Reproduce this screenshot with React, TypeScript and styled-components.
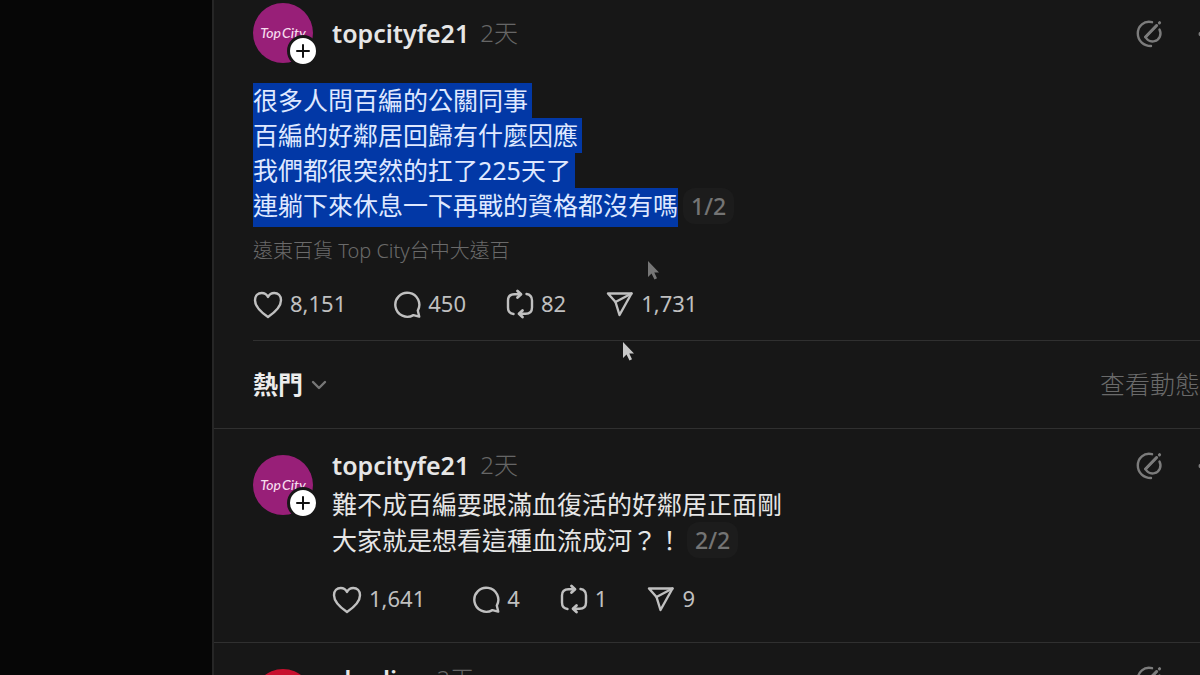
import React from "react";
import styled, { createGlobalStyle } from "styled-components";

const GlobalStyle = createGlobalStyle`
  * { box-sizing: border-box; }
  body {
    margin: 0;
    background: #060606;
    color: #e6e6e6;
    font-family: "Noto Sans", "Noto Sans CJK TC", sans-serif;
    font-size: 25px;
    overflow: hidden;
  }
  button {
    font: inherit;
    color: inherit;
    background: none;
    border: 0;
    padding: 0;
    cursor: pointer;
  }
  a { color: inherit; text-decoration: none; }
  svg { display: block; flex: none; }
`;

const Page = styled.div`
  position: relative;
  height: 100vh;
  padding-left: 212px;
  overflow: hidden;
`;

const Feed = styled.main`
  min-height: 100%;
  background: #171717;
  border-left: 2px solid #262626;
`;

const RootPost = styled.article`
  margin-left: 39px;
  padding: 3px 0 20px;
  border-bottom: 1px solid #303030;
`;

const PostHeader = styled.header`
  display: flex;
  align-items: center;
  gap: 19px;
`;

const Reply = styled.article`
  display: flex;
  gap: 19px;
  padding: 20px 0 27px 39px;
  border-bottom: 1px solid #303030;
`;

const ReplyMain = styled.div`
  flex: 1;
  min-width: 0;
`;

const NameRow = styled.div`
  flex: 1;
  display: flex;
  align-items: center;
  gap: 11px;
  height: 32px;
`;

const UserName = styled.a`
  font-weight: 600;
  line-height: 32px;
`;

const Time = styled.time`
  color: #666;
  font-size: 24px;
  font-weight: 300;
  line-height: 32px;
`;

const Tools = styled.div`
  display: flex;
  align-items: center;
  gap: 34px;
  margin-left: auto;
  margin-right: -25px;
  padding-top: 2px;
  color: #7c7c7c;
`;

const AvatarBox = styled.div<{ $low?: boolean }>`
  position: relative;
  flex: none;
  width: 60px;
  height: 60px;
  margin-top: ${(p) => (p.$low ? "6px" : "0")};
`;

const AvatarDisc = styled.a<{ $color: string }>`
  display: flex;
  align-items: center;
  justify-content: center;
  gap: 1px;
  width: 60px;
  height: 60px;
  border-radius: 50%;
  background: ${(p) => p.$color};
  color: #f6dcee;
  font: italic 500 14px/20px Lato, sans-serif;
  white-space: nowrap;
`;

const FollowButton = styled.button`
  position: absolute;
  right: -6px;
  bottom: -4px;
  display: flex;
  align-items: center;
  justify-content: center;
  width: 32px;
  height: 32px;
  border: 3px solid #171717;
  border-radius: 50%;
  background: #fff;
  color: #111;
`;

const Selected = styled.p`
  display: flex;
  flex-direction: column;
  align-items: flex-start;
  margin: 20px 0 0;
  line-height: 35px;
`;

const SelectedLine = styled.span<{ $last?: boolean }>`
  padding-right: ${(p) => (p.$last ? "0" : "4px")};
  padding-bottom: ${(p) => (p.$last ? "4px" : "0")};
  background: #0238a6;
  color: #dfe8ff;
`;

const LastLine = styled.span`
  display: flex;
  align-items: flex-start;
  gap: 5px;
`;

const Counter = styled.span`
  display: inline-block;
  padding: 0 8px;
  border-radius: 12px;
  background: #1c1c1c;
  color: #747474;
  font-size: 23px;
  font-weight: 500;
  line-height: 36px;
`;

const ReplyText = styled.p`
  display: flex;
  flex-direction: column;
  margin: 5px 0 0;
  line-height: 36px;
`;

const Caption = styled.p`
  margin: 10px 0 0;
  color: #6a6a6a;
  font-size: 20px;
  font-weight: 300;
  line-height: 28px;
`;

const Actions = styled.div<{ $gap: number }>`
  display: flex;
  align-items: center;
  gap: 40px;
  margin-top: ${(p) => p.$gap}px;
  color: #c0c0c0;
  font-size: 22px;
`;

const Action = styled.button<{ $wide?: boolean }>`
  display: flex;
  align-items: center;
  gap: 7px;
  height: 32px;
  padding-right: ${(p) => (p.$wide ? "7px" : "0")};
  line-height: 30px;
`;

const Count = styled.span`
  height: 32px;
`;

const SortBar = styled.nav`
  display: flex;
  align-items: center;
  justify-content: space-between;
  height: 88px;
  padding: 0 0 3px 39px;
  border-bottom: 1px solid #303030;
`;

const SortButton = styled.button`
  display: flex;
  align-items: center;
  gap: 7px;
  font-weight: 700;
  color: #ececec;
  svg { color: #777; margin-top: 4px; }
`;

const ActivityLink = styled.a`
  color: #6a6a6a;
  font-weight: 300;
  white-space: nowrap;
`;

const Pointer = styled.svg<{ $x: number; $y: number; $faded?: boolean }>`
  position: absolute;
  left: ${(p) => p.$x}px;
  top: ${(p) => p.$y}px;
  fill: ${(p) => (p.$faded ? "#777" : "#c8c8c8")};
  pointer-events: none;
`;

const line = {
  fill: "none",
  stroke: "currentColor",
  strokeWidth: 2.4,
  strokeLinecap: "round" as const,
  strokeLinejoin: "round" as const,
};

const Heart = () => (
  <svg width="30" height="30" viewBox="0 0 30 30" {...line}>
    <path d="M15 28C11.5 25.6 2 19 2 11.2C2 6.800 5 4 8.700 4C11.500 4 13.800 5.500 15 8C16.200 5.500 18.500 4 21.300 4C25 4 28 6.800 28 11.200C28 19 18.500 25.600 15 28Z" />
  </svg>
);

const Comment = () => (
  <svg width="28" height="30" viewBox="0 0 28 30" {...line}>
    <path d="M24.800 21.600A12 12 0 1 0 20.400 26.100L26.200 27.600Z" />
  </svg>
);

const Repost = () => (
  <svg width="28" height="30" viewBox="0 0 28 30" {...line}>
    <path d="M7.500 25C4 24.500 2 22.500 2 18.500V11.500C2 7.500 4.500 5.200 8.500 5.200H14.500" />
    <path d="M11.500 2L15 5.200L11.500 8.500" strokeWidth="2.800" />
    <path d="M20.500 5C24 5.500 26 7.500 26 11.500V18.500C26 22.500 23.500 24.800 19.500 24.800H13.500" />
    <path d="M16.500 21.500L13 24.800L16.500 28" strokeWidth="2.800" />
  </svg>
);

const Share = () => (
  <svg width="28" height="30" viewBox="0 0 28 30" {...line}>
    <path d="M2 4.500H25.500L13.500 26L9.500 13Z" />
    <path d="M9.500 13L25.500 4.500" />
  </svg>
);

const Edit = () => (
  <svg width="27" height="28" viewBox="0 0 27 28" {...line}>
    <path d="M16 2.200C8 .3 1.800 6 1.800 13.500C1.800 21 8 26 15 26" />
    <path d="M20.600 5.500L9.500 17C11.500 20.500 15 22 18.500 21.200C23.500 20 26 14.500 23.500 9.500" />
    <path d="M20.600 5.500L9.500 17" strokeWidth="3" />
    <path d="M23.400 2.900L23.600 2.700" strokeWidth="3" />
  </svg>
);

const More = () => (
  <svg width="28" height="28" viewBox="0 0 28 28" fill="currentColor">
    <circle cx="4" cy="14" r="2.500" />
    <circle cx="14" cy="14" r="2.500" />
    <circle cx="24" cy="14" r="2.500" />
  </svg>
);

const Plus = () => (
  <svg width="16" height="16" viewBox="0 0 16 16" {...line} strokeWidth={2}>
    <path d="M8 2V14M2 8H14" />
  </svg>
);

const Chevron = () => (
  <svg width="18" height="18" viewBox="0 0 18 18" {...line}>
    <path d="M3 6L9 12L15 6" />
  </svg>
);

const Arrow = (p: { x: number; y: number; faded?: boolean }) => (
  <Pointer $x={p.x} $y={p.y} $faded={p.faded} width="13" height="20" viewBox="0 0 13 20" aria-hidden="true">
    <path d="M1 1V17L4.500 13.500L7.500 19.500L10 18.300L7.300 12.500H12Z" />
  </Pointer>
);

type AvatarProps = { user: string; color: string; label?: string[]; low?: boolean };

const Avatar = ({ user, color, label = [], low }: AvatarProps) => (
  <AvatarBox $low={low}>
    <AvatarDisc href="#" $color={color} aria-label={user}>
      {label.map((word) => <span key={word}>{word}</span>)}
    </AvatarDisc>
    <FollowButton aria-label="追蹤">
      <Plus />
    </FollowButton>
  </AvatarBox>
);

const Author = ({ user }: { user: string }) => (
  <NameRow>
    <UserName href="#">{user}</UserName>
    <Time>2天</Time>
    <Tools>
      <button aria-label="編輯"><Edit /></button>
      <button aria-label="更多"><More /></button>
    </Tools>
  </NameRow>
);

type Counts = { likes: string; replies: string; reposts: string; shares: string; gap: number };

const ActionRow = ({ likes, replies, reposts, shares, gap }: Counts) => (
  <Actions $gap={gap}>
    <Action $wide aria-label={`讚 ${likes}`}><Heart /><Count>{likes}</Count></Action>
    <Action aria-label={`回覆 ${replies}`}><Comment /><Count>{replies}</Count></Action>
    <Action aria-label={`轉發 ${reposts}`}><Repost /><Count>{reposts}</Count></Action>
    <Action aria-label={`分享 ${shares}`}><Share /><Count>{shares}</Count></Action>
  </Actions>
);

export default function App() {
  return (
    <>
      <GlobalStyle />
      <Page>
        <Feed>
          <RootPost>
            <PostHeader>
              <Avatar user="topcityfe21" color="#981f78" label={["Top", "City"]} />
              <Author user="topcityfe21" />
            </PostHeader>
            <Selected>
              <SelectedLine>很多人問百編的公關同事</SelectedLine>
              <SelectedLine>百編的好鄰居回歸有什麼因應</SelectedLine>
              <SelectedLine>我們都很突然的扛了225天了</SelectedLine>
              <LastLine>
                <SelectedLine $last>連躺下來休息一下再戰的資格都沒有嗎</SelectedLine>
                <Counter>1/2</Counter>
              </LastLine>
            </Selected>
            <Caption>遠東百貨 Top City台中大遠百</Caption>
            <ActionRow likes="8,151" replies="450" reposts="82" shares="1,731" gap={23} />
          </RootPost>
          <SortBar>
            <SortButton>
              熱門
              <Chevron />
            </SortButton>
            <ActivityLink href="#">查看動態</ActivityLink>
          </SortBar>
          <Reply>
            <Avatar user="topcityfe21" color="#981f78" label={["Top", "City"]} low />
            <ReplyMain>
              <Author user="topcityfe21" />
              <ReplyText>
                <span>難不成百編要跟滿血復活的好鄰居正面剛</span>
                <LastLine>
                  <span>大家就是想看這種血流成河？！</span>
                  <Counter>2/2</Counter>
                </LastLine>
              </ReplyText>
              <ActionRow likes="1,641" replies="4" reposts="1" shares="9" gap={25} />
            </ReplyMain>
          </Reply>
          <Reply>
            <Avatar user="skmlive" color="#c8102e" low />
            <ReplyMain>
              <Author user="skmlive" />
            </ReplyMain>
          </Reply>
        </Feed>
        <Arrow x={647} y={260} faded />
        <Arrow x={622} y={341} />
      </Page>
    </>
  );
}
